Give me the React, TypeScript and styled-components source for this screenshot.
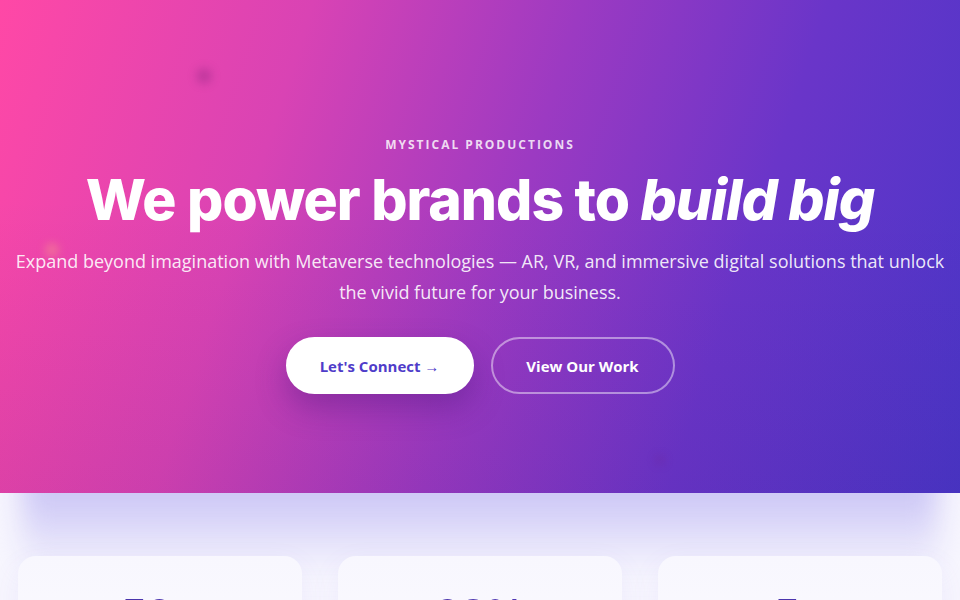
import styled, { createGlobalStyle } from 'styled-components';

const Global = createGlobalStyle`
  * { box-sizing: border-box; }
  html, body { margin: 0; padding: 0; }
  body {
    background: #f7f6fe;
    font-family: "Open Sans", "Noto Sans", sans-serif;
    overflow: hidden;
  }
`;

const Page = styled.div`
  width: 960px;
  min-height: 600px;
  overflow: hidden;
`;

const Hero = styled.section`
  position: relative;
  height: 493px;
  overflow: hidden;
  background: linear-gradient(108deg, #ff48a6 0%, #d943b4 28%, #9c3ac2 52%, #6a35c9 74%, #4a36c8 100%);
  display: flex;
  flex-direction: column;
  align-items: center;
  padding-top: 136px;
  text-align: center;
  color: #fff;
  &::after {
    content: '';
    position: absolute;
    inset: 0;
    background: linear-gradient(180deg, rgba(0, 0, 0, 0) 40%, rgba(40, 10, 90, 0.08) 100%);
    pointer-events: none;
  }
`;

const Particle = styled.span<{ $size: number; $color: string }>`
  position: absolute;
  width: ${(p) => p.$size}px;
  height: ${(p) => p.$size}px;
  border-radius: 50%;
  background: ${(p) => p.$color};
  filter: blur(4px);
`;

const Eyebrow = styled.div`
  position: relative;
  z-index: 1;
  font-size: 12px;
  font-weight: 700;
  letter-spacing: 2px;
  color: rgba(255, 255, 255, 0.82);
`;

const Title = styled.h1`
  position: relative;
  z-index: 1;
  margin: 13px 0 0;
  font-family: Inter, "Liberation Sans", sans-serif;
  font-weight: 800;
  font-size: 57px;
  line-height: 68px;
  letter-spacing: -1px;
  em {
    font-style: italic;
  }
`;

const Lead = styled.p`
  position: relative;
  z-index: 1;
  margin: 12px 0 0;
  width: 940px;
  font-size: 18px;
  line-height: 31px;
  color: rgba(255, 255, 255, 0.9);
`;

const Actions = styled.div`
  position: relative;
  z-index: 1;
  display: flex;
  gap: 17px;
  margin-top: 29px;
`;

const Button = styled.button<{ $primary?: boolean }>`
  height: 57px;
  padding: 0 30px;
  width: ${(p) => (p.$primary ? 188 : 184)}px;
  border-radius: 999px;
  font-family: "Open Sans", sans-serif;
  font-size: 15px;
  font-weight: 700;
  cursor: pointer;
  color: ${(p) => (p.$primary ? '#4f3cc9' : '#fff')};
  background: ${(p) => (p.$primary ? '#fff' : 'transparent')};
  border: 2px solid ${(p) => (p.$primary ? '#fff' : 'rgba(255,255,255,0.45)')};
  box-shadow: ${(p) => (p.$primary ? '0 14px 30px rgba(70, 20, 120, 0.35)' : 'none')};
`;

const Stats = styled.section`
  position: relative;
  overflow: hidden;
  padding: 63px 18px 0;
  &::before {
    content: '';
    position: absolute;
    left: 22px;
    right: 22px;
    top: -30px;
    height: 110px;
    background: linear-gradient(180deg, #c6c1f4 0%, #cfcaf6 35%, rgba(238, 236, 252, 0) 100%);
    filter: blur(14px);
  }
`;

const Grid = styled.div`
  position: relative;
  display: grid;
  grid-template-columns: repeat(3, 1fr);
  gap: 36px;
`;

const Card = styled.div`
  height: 200px;
  border-radius: 18px;
  background: linear-gradient(180deg, #f8f7fe 0%, #fdfcff 100%);
  box-shadow: 0 10px 30px rgba(110, 90, 220, 0.08);
  text-align: center;
  padding-top: 32px;
`;

const Number = styled.div`
  font-family: Inter, "Liberation Sans", sans-serif;
  font-weight: 800;
  font-size: 38px;
  line-height: 50px;
  background: linear-gradient(90deg, #3f2f9e, #5a3cc0);
  -webkit-background-clip: text;
  background-clip: text;
  color: transparent;
`;

const Label = styled.div`
  margin-top: 6px;
  font-size: 14px;
  color: #6b6890;
`;

const stats = [
  { value: '50+', label: 'Brands Empowered' },
  { value: '98%', label: 'Client Satisfaction' },
  { value: '5+', label: 'Years of Innovation' },
];

export default function App() {
  return (
    <Page>
      <Global />
      <Hero>
        <Particle $size={16} $color="rgba(120, 30, 120, 0.3)" style={{ left: 196, top: 68 }} />
        <Particle $size={14} $color="rgba(255, 200, 120, 0.3)" style={{ left: 45, top: 243 }} />
        <Particle $size={10} $color="rgba(120, 30, 140, 0.25)" style={{ left: 655, top: 455 }} />
        <Eyebrow>MYSTICAL PRODUCTIONS</Eyebrow>
        <Title>
          We power brands to <em>build big</em>
        </Title>
        <Lead>
          Expand beyond imagination with Metaverse technologies — AR, VR, and immersive digital solutions that unlock
          the vivid future for your business.
        </Lead>
        <Actions>
          <Button $primary>Let's Connect →</Button>
          <Button>View Our Work</Button>
        </Actions>
      </Hero>
      <Stats>
        <Grid>
          {stats.map((s) => (
            <Card key={s.label}>
              <Number>{s.value}</Number>
              <Label>{s.label}</Label>
            </Card>
          ))}
        </Grid>
      </Stats>
    </Page>
  );
}
